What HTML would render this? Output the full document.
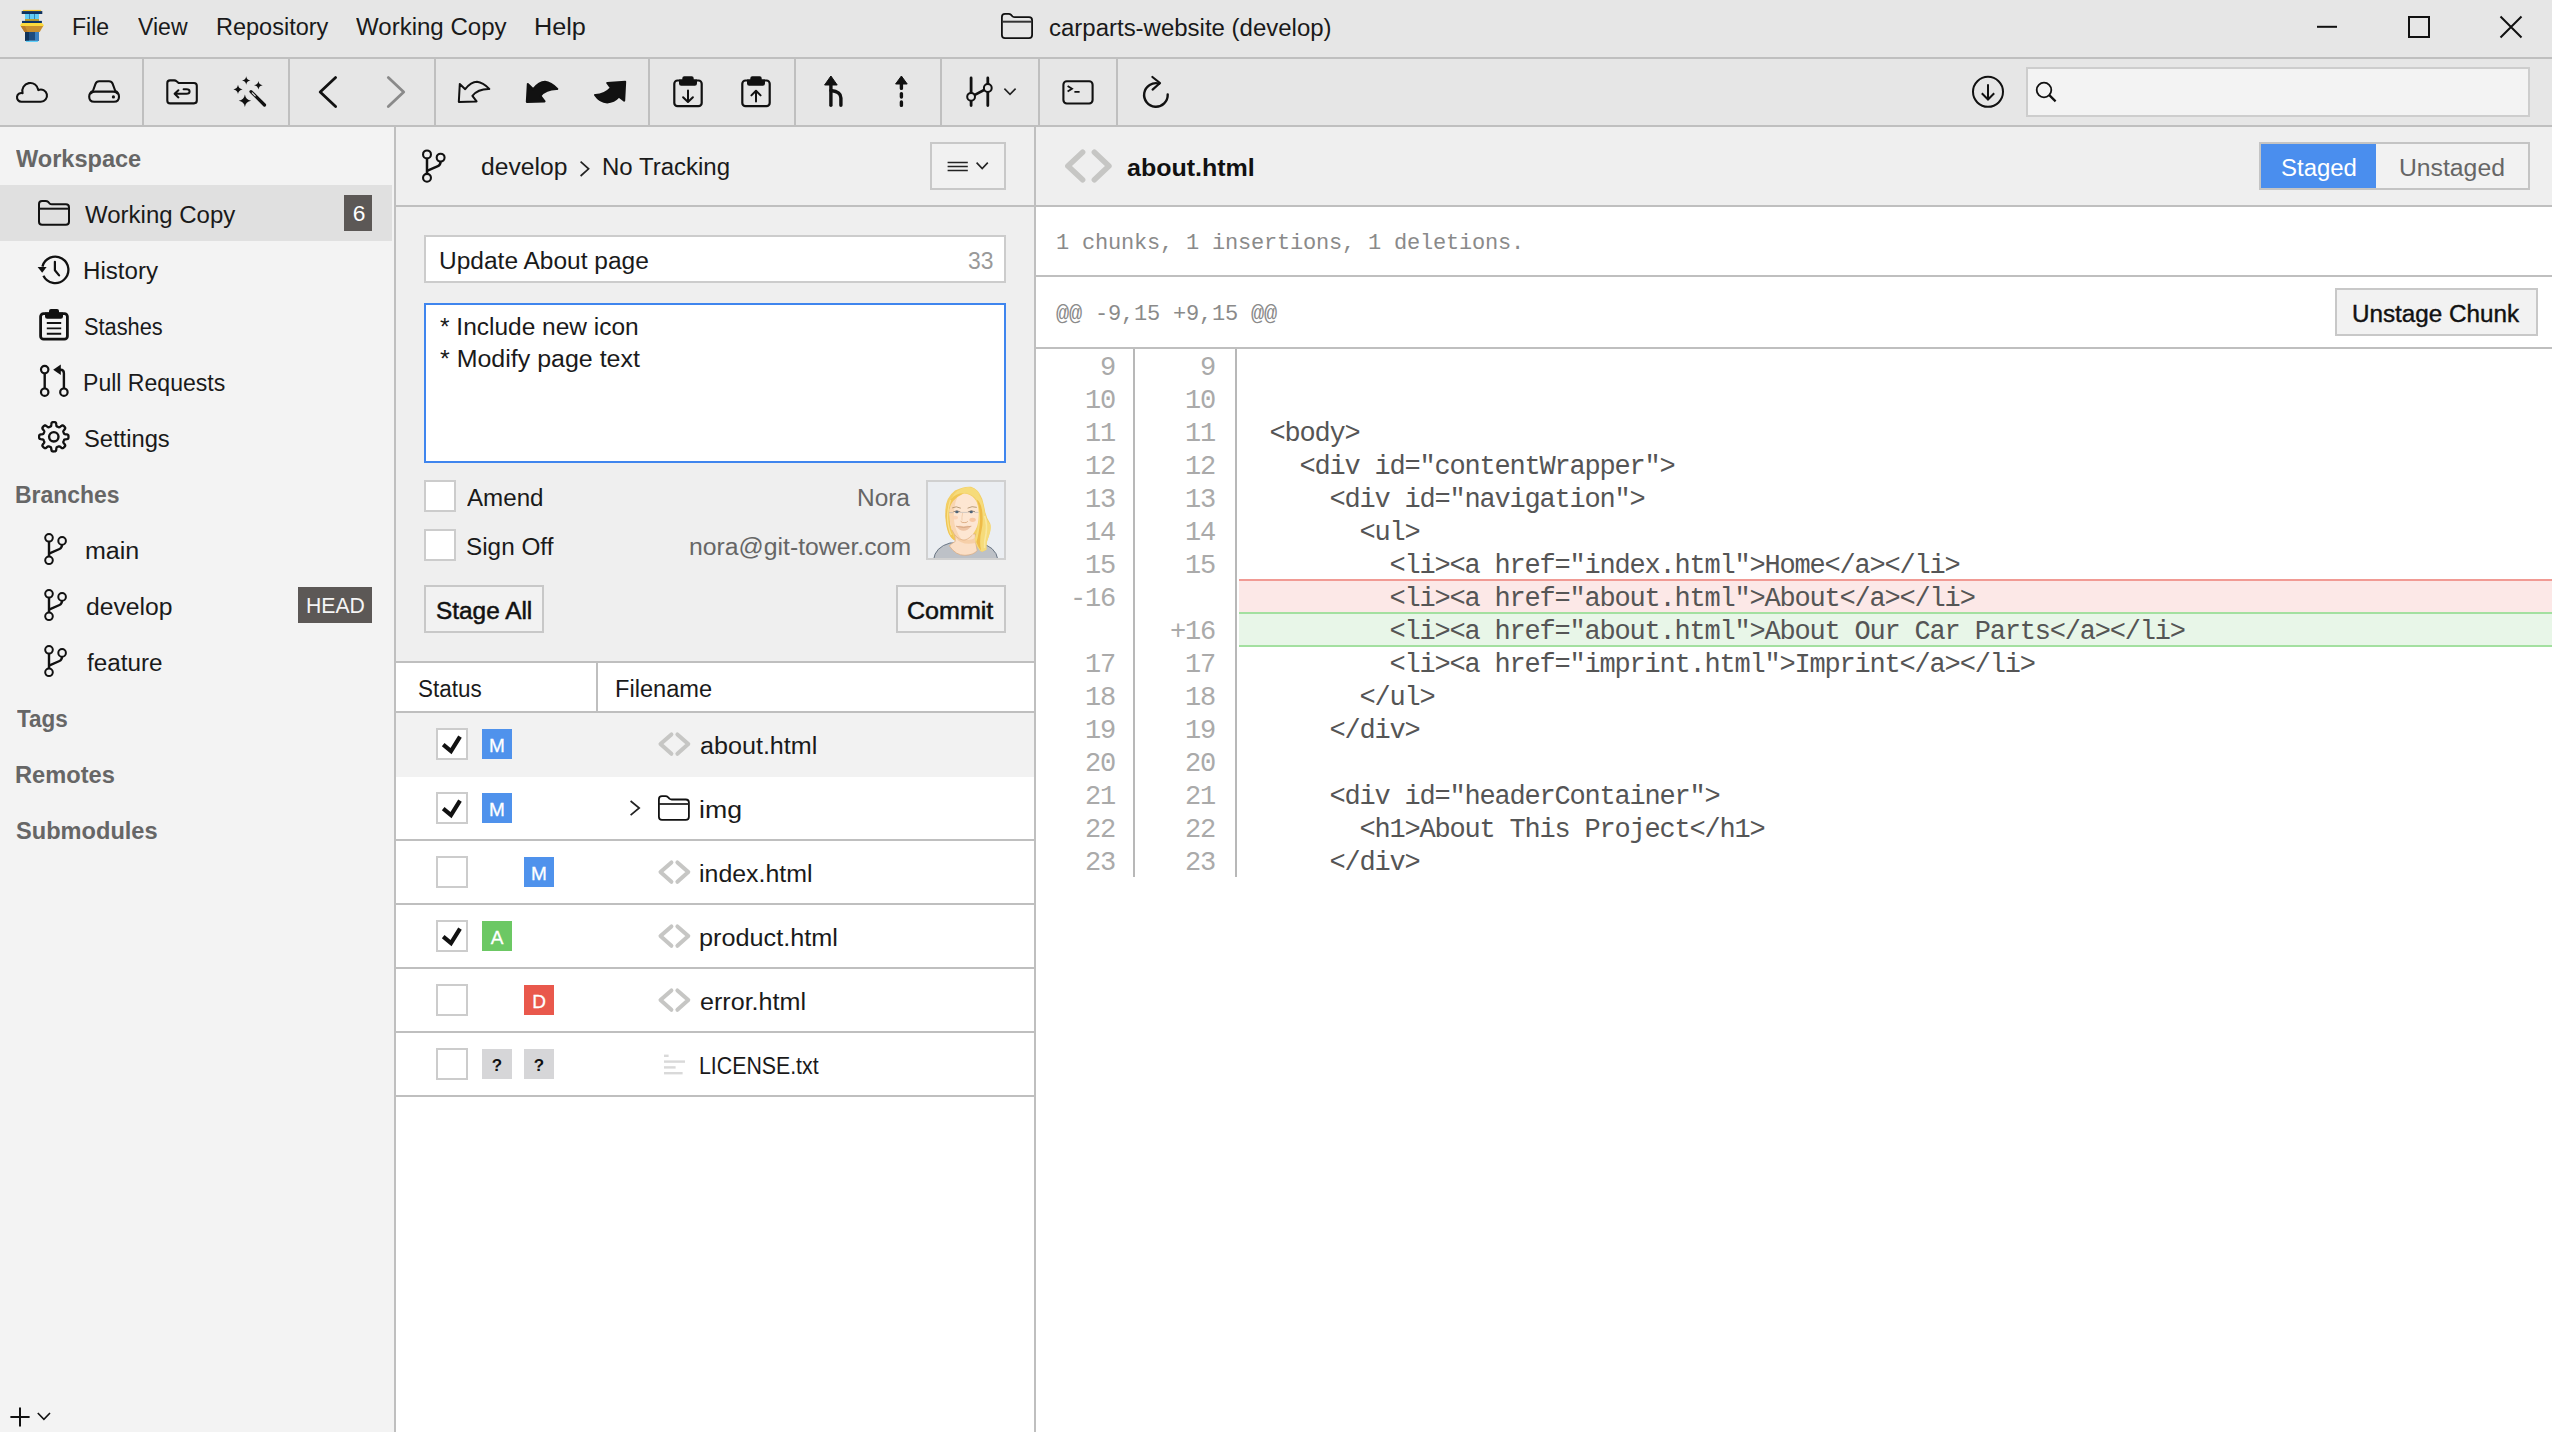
<!DOCTYPE html>
<html lang="en"><head><meta charset="utf-8"><title>carparts-website (develop)</title>
<style>
html,body{margin:0;padding:0;}
body{width:2552px;height:1432px;position:relative;overflow:hidden;background:#fff;font-family:'Liberation Sans', sans-serif;}
.r{position:absolute;}
.t{position:absolute;white-space:pre;line-height:1;}
.m{font-family:'Liberation Mono', monospace;}
svg{position:absolute;left:0;top:0;}
</style></head><body>
<div class="r" style="left:0px;top:0px;width:2552px;height:125px;background:#e6e6e6;"></div>
<div class="r" style="left:0px;top:57px;width:2552px;height:2px;background:#bfbfbf;"></div>
<div class="r" style="left:0px;top:125px;width:2552px;height:2px;background:#bfbfbf;"></div>
<div class="r" style="left:142px;top:59px;width:2px;height:66px;background:#bfbfbf;"></div>
<div class="r" style="left:288px;top:59px;width:2px;height:66px;background:#bfbfbf;"></div>
<div class="r" style="left:434px;top:59px;width:2px;height:66px;background:#bfbfbf;"></div>
<div class="r" style="left:648px;top:59px;width:2px;height:66px;background:#bfbfbf;"></div>
<div class="r" style="left:794px;top:59px;width:2px;height:66px;background:#bfbfbf;"></div>
<div class="r" style="left:940px;top:59px;width:2px;height:66px;background:#bfbfbf;"></div>
<div class="r" style="left:1038px;top:59px;width:2px;height:66px;background:#bfbfbf;"></div>
<div class="r" style="left:1116px;top:59px;width:2px;height:66px;background:#bfbfbf;"></div>
<div class="r" style="left:2026px;top:67px;width:504px;height:50px;background:#f3f3f3;border:2px solid #cdcdcd;box-sizing:border-box;"></div>
<div class="r" style="left:0px;top:127px;width:394px;height:1305px;background:#f3f3f3;"></div>
<div class="r" style="left:394px;top:127px;width:2px;height:1305px;background:#bfbfbf;"></div>
<div class="r" style="left:0px;top:185px;width:392px;height:56px;background:#e0e0e0;"></div>
<div class="r" style="left:344px;top:195px;width:28px;height:36px;background:#5c5856;"></div>
<div class="r" style="left:298px;top:587px;width:74px;height:36px;background:#5c5856;"></div>
<div class="r" style="left:396px;top:127px;width:638px;height:534px;background:#efefef;"></div>
<div class="r" style="left:1034px;top:127px;width:2px;height:1305px;background:#bfbfbf;"></div>
<div class="r" style="left:396px;top:205px;width:638px;height:2px;background:#bfbfbf;"></div>
<div class="r" style="left:396px;top:661px;width:638px;height:2px;background:#bfbfbf;"></div>
<div class="r" style="left:396px;top:711px;width:638px;height:2px;background:#bfbfbf;"></div>
<div class="r" style="left:596px;top:663px;width:2px;height:48px;background:#bfbfbf;"></div>
<div class="r" style="left:930px;top:142px;width:76px;height:48px;background:#f1f1f1;border:2px solid #c8c8c8;box-sizing:border-box;"></div>
<div class="r" style="left:424px;top:235px;width:582px;height:48px;background:#ffffff;border:2px solid #cccccc;box-sizing:border-box;"></div>
<div class="r" style="left:424px;top:303px;width:582px;height:160px;background:#ffffff;border:2px solid #3f85ee;box-sizing:border-box;"></div>
<div class="r" style="left:424px;top:480px;width:32px;height:32px;background:#ffffff;border:2px solid #cccccc;box-sizing:border-box;"></div>
<div class="r" style="left:424px;top:529px;width:32px;height:32px;background:#ffffff;border:2px solid #cccccc;box-sizing:border-box;"></div>
<div class="r" style="left:926px;top:480px;width:80px;height:80px;background:#ebeef2;border:2px solid #d0d0d0;box-sizing:border-box;"></div>
<div class="r" style="left:424px;top:585px;width:120px;height:48px;background:#f2f2f2;border:2px solid #c8c8c8;box-sizing:border-box;"></div>
<div class="r" style="left:896px;top:585px;width:110px;height:48px;background:#f2f2f2;border:2px solid #c8c8c8;box-sizing:border-box;"></div>
<div class="r" style="left:396px;top:713px;width:638px;height:64px;background:#f2f2f2;"></div>
<div class="r" style="left:396px;top:839px;width:638px;height:2px;background:#bfbfbf;"></div>
<div class="r" style="left:396px;top:903px;width:638px;height:2px;background:#bfbfbf;"></div>
<div class="r" style="left:396px;top:967px;width:638px;height:2px;background:#bfbfbf;"></div>
<div class="r" style="left:396px;top:1031px;width:638px;height:2px;background:#bfbfbf;"></div>
<div class="r" style="left:396px;top:1095px;width:638px;height:2px;background:#bfbfbf;"></div>
<div class="r" style="left:436px;top:728px;width:32px;height:32px;background:#ffffff;border:2px solid #cccccc;box-sizing:border-box;"></div>
<div class="r" style="left:436px;top:792px;width:32px;height:32px;background:#ffffff;border:2px solid #cccccc;box-sizing:border-box;"></div>
<div class="r" style="left:436px;top:856px;width:32px;height:32px;background:#ffffff;border:2px solid #cccccc;box-sizing:border-box;"></div>
<div class="r" style="left:436px;top:920px;width:32px;height:32px;background:#ffffff;border:2px solid #cccccc;box-sizing:border-box;"></div>
<div class="r" style="left:436px;top:984px;width:32px;height:32px;background:#ffffff;border:2px solid #cccccc;box-sizing:border-box;"></div>
<div class="r" style="left:436px;top:1048px;width:32px;height:32px;background:#ffffff;border:2px solid #cccccc;box-sizing:border-box;"></div>
<div class="r" style="left:482px;top:729px;width:30px;height:30px;background:#4f92ec;"></div>
<div class="r" style="left:482px;top:793px;width:30px;height:30px;background:#4f92ec;"></div>
<div class="r" style="left:524px;top:857px;width:30px;height:30px;background:#4f92ec;"></div>
<div class="r" style="left:482px;top:921px;width:30px;height:30px;background:#6cc864;"></div>
<div class="r" style="left:524px;top:985px;width:30px;height:30px;background:#e9584c;"></div>
<div class="r" style="left:482px;top:1049px;width:30px;height:30px;background:#d6d6d8;"></div>
<div class="r" style="left:524px;top:1049px;width:30px;height:30px;background:#d6d6d8;"></div>
<div class="r" style="left:1036px;top:127px;width:1516px;height:78px;background:#efefef;"></div>
<div class="r" style="left:1036px;top:205px;width:1516px;height:2px;background:#bfbfbf;"></div>
<div class="r" style="left:1036px;top:275px;width:1516px;height:2px;background:#bfbfbf;"></div>
<div class="r" style="left:1036px;top:347px;width:1516px;height:2px;background:#bfbfbf;"></div>
<div class="r" style="left:2259px;top:142px;width:271px;height:48px;background:#f2f2f2;border:2px solid #c4c4c4;box-sizing:border-box;"></div>
<div class="r" style="left:2261px;top:144px;width:115px;height:44px;background:#4a8eee;"></div>
<div class="r" style="left:2335px;top:288px;width:203px;height:48px;background:#f2f2f2;border:2px solid #c8c8c8;box-sizing:border-box;"></div>
<div class="r" style="left:1133px;top:349px;width:2px;height:528px;background:#b8b8b8;"></div>
<div class="r" style="left:1235px;top:349px;width:2px;height:528px;background:#b8b8b8;"></div>
<div class="r" style="left:1239px;top:579px;width:1313px;height:34px;background:#fce8e7;border-top:2px solid #f19a94;box-sizing:border-box;"></div>
<div class="r" style="left:1239px;top:612px;width:1313px;height:35px;background:#e8f6e8;border-top:2px solid #a3e0a0;border-bottom:2px solid #a3e0a0;box-sizing:border-box;"></div>
<svg width="2552" height="1432" viewBox="0 0 2552 1432">
<g><rect x="22.9" y="9.9" width="18.2" height="1.4" fill="#f8c82c"/><rect x="21.7" y="11.1" width="20.6" height="2.9" fill="#10335f"/><rect x="25" y="14" width="14" height="5.1" fill="#63cdf5"/><rect x="29" y="14" width="0.9" height="5.1" fill="#2d7db5"/><rect x="34.1" y="14" width="0.9" height="5.1" fill="#2d7db5"/><rect x="25" y="19.1" width="14" height="1.8" fill="#b8981e"/><rect x="22" y="20.9" width="19.9" height="2.1" fill="#0c3365"/><path d="M22 23 H41.9 L44 25.2 L43.2 26.2 H20.8 L20 25.2 Z" fill="#fbd93c"/><path d="M20.8 26.1 H43.2 L39.7 32 H24.5 Z" fill="#c98f2e"/><path d="M20.8 26.1 H25 L27.5 32 H24.5 Z" fill="#b87a2a"/><rect x="25" y="32" width="14" height="8.8" fill="#1e4b7e"/><rect x="25" y="32" width="4" height="8.8" fill="#0f3158"/><rect x="35" y="32" width="4" height="8.8" fill="#3a7fc0"/><rect x="25.9" y="40.8" width="12" height="1.2" fill="#5fd0fa"/></g>
<path d="M1001.9 35.0 V17.0 Q1001.9 13.9 1005.0 13.9 H1008.4599999999999 Q1010.06 13.9 1011.26 15.0 L1012.4599999999999 16.3 Q1013.4599999999999 17.2 1014.8599999999999 17.2 H1029.0 Q1032.1 17.2 1032.1 20.3 V35.0 Q1032.1 38.1 1029.0 38.1 H1005.0 Q1001.9 38.1 1001.9 35.0 Z" fill="none" stroke="#111111" stroke-width="1.8" stroke-linecap="round" stroke-linejoin="round" />
<path d="M1001.9 21.7 H1032.1" fill="none" stroke="#333" stroke-width="2.0" stroke-linecap="butt" stroke-linejoin="round" />
<path d="M2317 26.8 H2337" fill="none" stroke="#111111" stroke-width="2" stroke-linecap="butt" stroke-linejoin="round" />
<rect x="2409" y="17" width="20" height="20" fill="none" stroke="#111" stroke-width="2"/>
<path d="M2500.5 16.5 L2521.5 37.5 M2521.5 16.5 L2500.5 37.5" fill="none" stroke="#111111" stroke-width="2" stroke-linecap="butt" stroke-linejoin="round" />
<path d="M21.35 101.7 H40.9 A6.1 6.1 0 1 0 38.34 90.06 A8.05 8.05 0 1 0 22.59 93.18 A4.35 4.35 0 1 0 21.35 101.7 Z" fill="none" stroke="#111111" stroke-width="2.1" stroke-linecap="round" stroke-linejoin="round" />
<path d="M92.9 91 L95.6 83.6 Q96.5 81.2 99.2 81.2 H109 Q111.7 81.2 112.6 83.6 L115.3 91 Q119 92.6 119 96.8 Q119 101.8 114 101.8 H94.2 Q89.2 101.8 89.2 96.8 Q89.2 92.6 92.9 91 Z" fill="none" stroke="#111111" stroke-width="2.1" stroke-linecap="round" stroke-linejoin="round" />
<path d="M90.9 93.4 Q92.2 91.6 95 91.6 H113.2 Q116 91.6 117.3 93.4" fill="none" stroke="#111111" stroke-width="2.1" stroke-linecap="round" stroke-linejoin="round" />
<circle cx="113.4" cy="96.9" r="1.6" fill="#111"/>
<path d="M167.3 100.5 V83 Q167.3 80.4 170 80.4 H174.2 Q175.6 80.4 176.6 81.3 L178.6 83 H194 Q196.8 83 196.8 85.8 V100.6 Q196.8 103.4 194 103.4 H170.1 Q167.3 103.4 167.3 100.5 Z" fill="none" stroke="#111111" stroke-width="2.1" stroke-linecap="round" stroke-linejoin="round" />
<path d="M175 93.8 H186.4 Q189.6 93.8 189.6 91.5 Q189.6 89.3 186.4 89.3 H183.6 M178.4 90.2 L174.6 93.8 L178.4 97.4" fill="none" stroke="#111111" stroke-width="2" stroke-linecap="round" stroke-linejoin="round" />
<path d="M251 91.6 L264.5 105" fill="none" stroke="#111111" stroke-width="3.2" stroke-linecap="round" stroke-linejoin="round" />
<path d="M252.3 92.9 L255.2 95.8" fill="none" stroke="#e6e6e6" stroke-width="1.2" stroke-linecap="round" stroke-linejoin="round" />
<path d="M246.2 76.3 Q246.74599999999998 79.954 250.39999999999998 80.5 Q246.74599999999998 81.046 246.2 84.7 Q245.654 81.046 242.0 80.5 Q245.654 79.954 246.2 76.3 Z" fill="#111"/>
<path d="M258.4 80.9 Q258.959 84.641 262.7 85.2 Q258.959 85.759 258.4 89.5 Q257.84099999999995 85.759 254.09999999999997 85.2 Q257.84099999999995 84.641 258.4 80.9 Z" fill="#111"/>
<path d="M238 84.80000000000001 Q238.598 88.802 242.6 89.4 Q238.598 89.998 238 94.0 Q237.402 89.998 233.4 89.4 Q237.402 88.802 238 84.80000000000001 Z" fill="#111"/>
<path d="M244.9 94.6 Q245.70600000000002 99.994 251.1 100.8 Q245.70600000000002 101.606 244.9 107.0 Q244.094 101.606 238.70000000000002 100.8 Q244.094 99.994 244.9 94.6 Z" fill="#111"/>
<path d="M335.6 77.6 L320.2 92 L335.6 106.6" fill="none" stroke="#111111" stroke-width="2.8" stroke-linecap="round" stroke-linejoin="round" />
<path d="M388.3 77.6 L403.7 92 L388.3 106.6" fill="none" stroke="#8a8a8a" stroke-width="2.8" stroke-linecap="round" stroke-linejoin="round" />
<path d="M459.8 84 L458.8 101.9 L476.6 101.4 L472.4 95.8 Q478 88.6 489.3 88.9 Q483 82.5 477 81.8 Q471 81.8 465.2 89.2 Z" fill="none" stroke="#111111" stroke-width="2" stroke-linecap="round" stroke-linejoin="round" />
<path d="M527.8 84 L526.8 101.9 L544.6 101.4 L540.4 95.8 Q546 88.6 557.3 88.9 Q551 82.5 545 81.8 Q539 81.8 533.2 89.2 Z" fill="#111111" stroke="#111111" stroke-width="2" stroke-linecap="round" stroke-linejoin="round" />
<path d="M625.2 81.8 L607.2 83 L610.9 88 Q604 95.2 595 95 Q600 102.4 607.2 102.4 Q614 102 619 96.6 L624.2 100.6 Z" fill="#111111" stroke="#111111" stroke-width="2" stroke-linecap="round" stroke-linejoin="round" />
<rect x="674.3" y="80.5" width="27.4" height="25.6" rx="3.2" fill="none" stroke="#111" stroke-width="2.2"/>
<path d="M679 79.6 H682 Q682.6 76.2 685.5 76.2 H690.5 Q693.4 76.2 694 79.6 H697 V83.4 Q0 0 0 0" fill="none"/>
<path d="M679 79.4 H682.3 V78.2 Q682.3 76.2 684.3 76.2 H691.7 Q693.7 76.2 693.7 78.2 V79.4 H697 V83.6 Q697 85.8 694.8 85.8 H681.2 Q679 85.8 679 83.6 Z" fill="#111"/>
<path d="M688 90.4 V101.8 M683.1 97.2 L688 102 L692.9 97.2" fill="none" stroke="#111111" stroke-width="2" stroke-linecap="round" stroke-linejoin="round" />
<rect x="742.3" y="80.5" width="27.4" height="25.6" rx="3.2" fill="none" stroke="#111" stroke-width="2.2"/>
<path d="M747 79.6 H750 Q750.6 76.2 753.5 76.2 H758.5 Q761.4 76.2 762 79.6 H765 V83.4 Q0 0 0 0" fill="none"/>
<path d="M747 79.4 H750.3 V78.2 Q750.3 76.2 752.3 76.2 H759.7 Q761.7 76.2 761.7 78.2 V79.4 H765 V83.6 Q765 85.8 762.8 85.8 H749.2 Q747 85.8 747 83.6 Z" fill="#111"/>
<path d="M756 101.6 V91 M751.4 95.4 L756 90.8 L760.6 95.4" fill="none" stroke="#111111" stroke-width="2" stroke-linecap="round" stroke-linejoin="round" />
<path d="M830.9 76 L837.2 85 H824.6 Z" fill="#111" stroke="#111" stroke-width="1" stroke-linejoin="round"/>
<path d="M830.9 84 V105.2" fill="none" stroke="#111111" stroke-width="3.4" stroke-linecap="round" stroke-linejoin="round" />
<path d="M830.9 90.5 Q840.9 91.5 840.9 98 V105.2" fill="none" stroke="#111111" stroke-width="3.4" stroke-linecap="round" stroke-linejoin="round" />
<path d="M901.4 76 L907.2 84 H895.6 Z" fill="#111" stroke="#111" stroke-width="1" stroke-linejoin="round"/>
<path d="M901.4 84 V88.4 M901.4 93.6 V97 M901.4 102 V105.4" fill="none" stroke="#111111" stroke-width="3.4" stroke-linecap="round" stroke-linejoin="round" />
<path d="M971.1 78 V105.6 M987.8 78 V105.6" fill="none" stroke="#111111" stroke-width="2.8" stroke-linecap="round" stroke-linejoin="round" />
<path d="M971.1 96.8 L987.8 88" fill="none" stroke="#111111" stroke-width="2.6" stroke-linecap="round" stroke-linejoin="round" />
<circle cx="971.1" cy="96.8" r="3.9" fill="#e6e6e6" stroke="#111111" stroke-width="2.0"/>
<circle cx="987.8" cy="88" r="3.9" fill="#e6e6e6" stroke="#111111" stroke-width="2.0"/>
<path d="M1004.4 88.6 L1010 94.4 L1015.6 88.6" fill="none" stroke="#222" stroke-width="1.6" stroke-linecap="butt" stroke-linejoin="miter" />
<rect x="1063.4" y="81.3" width="29.2" height="22.2" rx="3.4" fill="none" stroke="#111" stroke-width="2.1"/>
<path d="M1067.6 86 L1072 88.8 L1067.6 91.6 M1074.4 91.8 H1079.6" fill="none" stroke="#111111" stroke-width="1.8" stroke-linecap="butt" stroke-linejoin="miter" />
<path d="M1159.2 83.6 A11.8 11.8 0 1 0 1167.7 94.4" fill="none" stroke="#111111" stroke-width="2.4" stroke-linecap="round" stroke-linejoin="round" />
<path d="M1152.4 77 L1160 83 L1152.6 89.6" fill="none" stroke="#111111" stroke-width="2.2" stroke-linecap="round" stroke-linejoin="round" />
<circle cx="1988" cy="91.85" r="15" fill="none" stroke="#111111" stroke-width="2.0"/>
<path d="M1988 84.2 V99.2 M1981.8 93.3 L1988 99.5 L1994.2 93.3" fill="none" stroke="#111111" stroke-width="2.0" stroke-linecap="butt" stroke-linejoin="miter" />
<circle cx="2044" cy="90" r="7.3" fill="none" stroke="#111111" stroke-width="1.8"/>
<path d="M2049.3 95.2 L2055.6 101.3" fill="none" stroke="#111111" stroke-width="2.3" stroke-linecap="butt" stroke-linejoin="round" />
<path d="M39.0 221.70000000000002 V204.1 Q39.0 201.0 42.1 201.0 H45.559999999999995 Q47.16 201.0 48.36 202.1 L49.559999999999995 203.4 Q50.559999999999995 204.3 51.959999999999994 204.3 H65.9 Q69.0 204.3 69.0 207.4 V221.70000000000002 Q69.0 224.8 65.9 224.8 H42.1 Q39.0 224.8 39.0 221.70000000000002 Z" fill="none" stroke="#111111" stroke-width="2.0" stroke-linecap="round" stroke-linejoin="round" />
<path d="M39.0 208.7 H69.0" fill="none" stroke="#161616" stroke-width="2.0" stroke-linecap="butt" stroke-linejoin="round" />
<path d="M42.4 266.6 A13.2 13.2 0 1 1 43.4 275.8" fill="none" stroke="#111111" stroke-width="2.3" stroke-linecap="butt" stroke-linejoin="round" />
<path d="M37.6 267.0 H46.6 L42.2 272.8 Z" fill="#111"/>
<path d="M54.9 261.8 V270.2 L59.1 275.4" fill="none" stroke="#111111" stroke-width="2.2" stroke-linecap="round" stroke-linejoin="round" />
<rect x="40.6" y="313.6" width="26.8" height="25.6" rx="3" fill="none" stroke="#111" stroke-width="2.8"/>
<path d="M45 312.4 H49 V311 Q49 309 51 309 H57 Q59 309 59 311 V312.4 H63 V316.6 Q63 318.8 60.8 318.8 H47.2 Q45 318.8 45 316.6 Z" fill="#111"/>
<path d="M46.8 323 H61.2 M46.8 328.4 H61.2 M46.8 333.8 H61.2" fill="none" stroke="#111111" stroke-width="1.9" stroke-linecap="butt" stroke-linejoin="round" />
<circle cx="44.7" cy="369.6" r="3.7" fill="none" stroke="#111111" stroke-width="2.2"/>
<circle cx="44.7" cy="392.2" r="3.7" fill="none" stroke="#111111" stroke-width="2.2"/>
<circle cx="63.9" cy="392.2" r="3.7" fill="none" stroke="#111111" stroke-width="2.2"/>
<path d="M44.7 373.4 V388.4" fill="none" stroke="#111111" stroke-width="2.4" stroke-linecap="butt" stroke-linejoin="round" />
<path d="M63.9 388.4 V373.2 Q63.9 369.8 60.5 369.8 H59" fill="none" stroke="#111111" stroke-width="2.4" stroke-linecap="butt" stroke-linejoin="round" />
<path d="M53.2 369.8 L60.8 364.6 V375 Z" fill="#111"/>
<path d="M68.48 436.80 L68.47 437.18 L68.45 437.57 L68.40 437.95 L68.30 438.32 L68.10 438.68 L67.66 439.00 L66.81 439.21 L65.70 439.33 L64.85 439.45 L64.40 439.64 L64.17 439.87 L64.03 440.12 L63.92 440.38 L63.81 440.64 L63.71 440.90 L63.60 441.16 L63.49 441.42 L63.39 441.68 L63.31 441.96 L63.31 442.29 L63.49 442.74 L64.01 443.43 L64.70 444.29 L65.15 445.05 L65.24 445.58 L65.13 445.98 L64.93 446.31 L64.70 446.61 L64.45 446.90 L64.18 447.18 L63.90 447.45 L63.61 447.70 L63.31 447.93 L62.98 448.13 L62.58 448.24 L62.05 448.15 L61.29 447.70 L60.43 447.01 L59.74 446.49 L59.29 446.31 L58.96 446.31 L58.68 446.39 L58.42 446.49 L58.16 446.60 L57.90 446.71 L57.64 446.81 L57.38 446.92 L57.12 447.03 L56.87 447.17 L56.64 447.40 L56.45 447.85 L56.33 448.70 L56.21 449.81 L56.00 450.66 L55.68 451.10 L55.32 451.30 L54.95 451.40 L54.57 451.45 L54.18 451.47 L53.80 451.48 L53.42 451.47 L53.03 451.45 L52.65 451.40 L52.28 451.30 L51.92 451.10 L51.60 450.66 L51.39 449.81 L51.27 448.70 L51.15 447.85 L50.96 447.40 L50.73 447.17 L50.48 447.03 L50.22 446.92 L49.96 446.81 L49.70 446.71 L49.44 446.60 L49.18 446.49 L48.92 446.39 L48.64 446.31 L48.31 446.31 L47.86 446.49 L47.17 447.01 L46.31 447.70 L45.55 448.15 L45.02 448.24 L44.62 448.13 L44.29 447.93 L43.99 447.70 L43.70 447.45 L43.42 447.18 L43.15 446.90 L42.90 446.61 L42.67 446.31 L42.47 445.98 L42.36 445.58 L42.45 445.05 L42.90 444.29 L43.59 443.43 L44.11 442.74 L44.29 442.29 L44.29 441.96 L44.21 441.68 L44.11 441.42 L44.00 441.16 L43.89 440.90 L43.79 440.64 L43.68 440.38 L43.57 440.12 L43.43 439.87 L43.20 439.64 L42.75 439.45 L41.90 439.33 L40.79 439.21 L39.94 439.00 L39.50 438.68 L39.30 438.32 L39.20 437.95 L39.15 437.57 L39.13 437.18 L39.12 436.80 L39.13 436.42 L39.15 436.03 L39.20 435.65 L39.30 435.28 L39.50 434.92 L39.94 434.60 L40.79 434.39 L41.90 434.27 L42.75 434.15 L43.20 433.96 L43.43 433.73 L43.57 433.48 L43.68 433.22 L43.79 432.96 L43.89 432.70 L44.00 432.44 L44.11 432.18 L44.21 431.92 L44.29 431.64 L44.29 431.31 L44.11 430.86 L43.59 430.17 L42.90 429.31 L42.45 428.55 L42.36 428.02 L42.47 427.62 L42.67 427.29 L42.90 426.99 L43.15 426.70 L43.42 426.42 L43.70 426.15 L43.99 425.90 L44.29 425.67 L44.62 425.47 L45.02 425.36 L45.55 425.45 L46.31 425.90 L47.17 426.59 L47.86 427.11 L48.31 427.29 L48.64 427.29 L48.92 427.21 L49.18 427.11 L49.44 427.00 L49.70 426.89 L49.96 426.79 L50.22 426.68 L50.48 426.57 L50.73 426.43 L50.96 426.20 L51.15 425.75 L51.27 424.90 L51.39 423.79 L51.60 422.94 L51.92 422.50 L52.28 422.30 L52.65 422.20 L53.03 422.15 L53.42 422.13 L53.80 422.12 L54.18 422.13 L54.57 422.15 L54.95 422.20 L55.32 422.30 L55.68 422.50 L56.00 422.94 L56.21 423.79 L56.33 424.90 L56.45 425.75 L56.64 426.20 L56.87 426.43 L57.12 426.57 L57.38 426.68 L57.64 426.79 L57.90 426.89 L58.16 427.00 L58.42 427.11 L58.68 427.21 L58.96 427.29 L59.29 427.29 L59.74 427.11 L60.43 426.59 L61.29 425.90 L62.05 425.45 L62.58 425.36 L62.98 425.47 L63.31 425.67 L63.61 425.90 L63.90 426.15 L64.18 426.42 L64.45 426.70 L64.70 426.99 L64.93 427.29 L65.13 427.62 L65.24 428.02 L65.15 428.55 L64.70 429.31 L64.01 430.17 L63.49 430.86 L63.31 431.31 L63.31 431.64 L63.39 431.92 L63.49 432.18 L63.60 432.44 L63.71 432.70 L63.81 432.96 L63.92 433.22 L64.03 433.48 L64.17 433.73 L64.40 433.96 L64.85 434.15 L65.70 434.27 L66.81 434.39 L67.66 434.60 L68.10 434.92 L68.30 435.28 L68.40 435.65 L68.45 436.03 L68.47 436.42 Z" fill="none" stroke="#111111" stroke-width="2.3" stroke-linecap="round" stroke-linejoin="round" />
<circle cx="53.8" cy="436.8" r="4.7" fill="none" stroke="#111111" stroke-width="2.4"/>
<circle cx="49.0" cy="537.8" r="3.8" fill="none" stroke="#111111" stroke-width="2.0"/>
<circle cx="62.1" cy="540.9" r="3.8" fill="none" stroke="#111111" stroke-width="2.0"/>
<circle cx="49.0" cy="560.3" r="3.8" fill="none" stroke="#111111" stroke-width="2.0"/>
<path d="M49.0 541.6 V556.5" fill="none" stroke="#111111" stroke-width="2.4" stroke-linecap="butt" stroke-linejoin="round" />
<path d="M62.1 544.7 Q61.8 548.0 59.5 549.0 L49.0 553.6" fill="none" stroke="#111111" stroke-width="2.4" stroke-linecap="butt" stroke-linejoin="round" />
<circle cx="49.0" cy="593.8" r="3.8" fill="none" stroke="#111111" stroke-width="2.0"/>
<circle cx="62.1" cy="596.9" r="3.8" fill="none" stroke="#111111" stroke-width="2.0"/>
<circle cx="49.0" cy="616.3" r="3.8" fill="none" stroke="#111111" stroke-width="2.0"/>
<path d="M49.0 597.6 V612.5" fill="none" stroke="#111111" stroke-width="2.4" stroke-linecap="butt" stroke-linejoin="round" />
<path d="M62.1 600.7 Q61.8 604.0 59.5 605.0 L49.0 609.6" fill="none" stroke="#111111" stroke-width="2.4" stroke-linecap="butt" stroke-linejoin="round" />
<circle cx="49.0" cy="649.8" r="3.8" fill="none" stroke="#111111" stroke-width="2.0"/>
<circle cx="62.1" cy="652.9" r="3.8" fill="none" stroke="#111111" stroke-width="2.0"/>
<circle cx="49.0" cy="672.3" r="3.8" fill="none" stroke="#111111" stroke-width="2.0"/>
<path d="M49.0 653.6 V668.5" fill="none" stroke="#111111" stroke-width="2.4" stroke-linecap="butt" stroke-linejoin="round" />
<path d="M62.1 656.7 Q61.8 660.0 59.5 661.0 L49.0 665.6" fill="none" stroke="#111111" stroke-width="2.4" stroke-linecap="butt" stroke-linejoin="round" />
<circle cx="427.0" cy="154.4" r="3.952" fill="none" stroke="#111111" stroke-width="2.08"/>
<circle cx="440.624" cy="157.62400000000002" r="3.952" fill="none" stroke="#111111" stroke-width="2.08"/>
<circle cx="427.0" cy="177.8" r="3.952" fill="none" stroke="#111111" stroke-width="2.08"/>
<path d="M427.0 158.3520000000001 V173.84800000000004" fill="none" stroke="#111111" stroke-width="2.496" stroke-linecap="butt" stroke-linejoin="round" />
<path d="M440.624 161.5760000000001 Q440.312 165.00800000000007 437.92 166.04800000000006 L427.0 170.83200000000008" fill="none" stroke="#111111" stroke-width="2.496" stroke-linecap="butt" stroke-linejoin="round" />
<path d="M20 1407.6 V1426.4 M10.4 1417 H29.6" fill="none" stroke="#111111" stroke-width="2" stroke-linecap="butt" stroke-linejoin="round" />
<path d="M37.8 1413 L43.9 1419.4 L50 1413" fill="none" stroke="#111111" stroke-width="1.6" stroke-linecap="butt" stroke-linejoin="miter" />
<path d="M580.6 161.6 L588.6 168.8 L580.6 176" fill="none" stroke="#222" stroke-width="1.7" stroke-linecap="butt" stroke-linejoin="miter" />
<path d="M947.6 162.4 H967.8 M947.6 166.4 H967.8 M947.6 170.4 H967.8" fill="none" stroke="#222" stroke-width="1.5" stroke-linecap="butt" stroke-linejoin="round" />
<path d="M976.6 162.6 L982.2 168.6 L987.8 162.6" fill="none" stroke="#222" stroke-width="1.6" stroke-linecap="butt" stroke-linejoin="miter" />
<path d="M443.2 744.6 L451 751 L460 736.6" fill="none" stroke="#111111" stroke-width="4.2" stroke-linecap="butt" stroke-linejoin="miter" />
<path d="M443.2 808.6 L451 815 L460 800.6" fill="none" stroke="#111111" stroke-width="4.2" stroke-linecap="butt" stroke-linejoin="miter" />
<path d="M443.2 936.6 L451 943 L460 928.6" fill="none" stroke="#111111" stroke-width="4.2" stroke-linecap="butt" stroke-linejoin="miter" />
<path d="M671.4 734.4 L660.5 744.1 L671.4 753.8000000000001 M677.4 734.4 L688.3 744.1 L677.4 753.8000000000001" fill="none" stroke="#c6c6c4" stroke-width="4.0" stroke-linecap="round" stroke-linejoin="round" />
<path d="M671.4 862.4 L660.5 872.1 L671.4 881.8000000000001 M677.4 862.4 L688.3 872.1 L677.4 881.8000000000001" fill="none" stroke="#c6c6c4" stroke-width="4.0" stroke-linecap="round" stroke-linejoin="round" />
<path d="M671.4 926.4 L660.5 936.1 L671.4 945.8000000000001 M677.4 926.4 L688.3 936.1 L677.4 945.8000000000001" fill="none" stroke="#c6c6c4" stroke-width="4.0" stroke-linecap="round" stroke-linejoin="round" />
<path d="M671.4 990.4 L660.5 1000.1 L671.4 1009.8000000000001 M677.4 990.4 L688.3 1000.1 L677.4 1009.8000000000001" fill="none" stroke="#c6c6c4" stroke-width="4.0" stroke-linecap="round" stroke-linejoin="round" />
<path d="M630.6 801 L639.2 808 L630.6 815.2" fill="none" stroke="#222" stroke-width="1.7" stroke-linecap="butt" stroke-linejoin="miter" />
<path d="M658.9 816.6999999999999 V799.3 Q658.9 796.1999999999999 662.0 796.1999999999999 H665.409 Q667.009 796.1999999999999 668.2090000000001 797.3 L669.409 798.5999999999999 Q670.409 799.4999999999999 671.809 799.4999999999999 H685.8 Q688.9 799.4999999999999 688.9 802.5999999999999 V816.6999999999999 Q688.9 819.8 685.8 819.8 H662.0 Q658.9 819.8 658.9 816.6999999999999 Z" fill="none" stroke="#111111" stroke-width="1.8" stroke-linecap="round" stroke-linejoin="round" />
<path d="M658.9 804.0 H688.9" fill="none" stroke="#222" stroke-width="1.8" stroke-linecap="butt" stroke-linejoin="round" />
<g fill="#d9d9d9"><rect x="664" y="1054.6" width="4.6" height="2.4"/><rect x="664" y="1060.4" width="21" height="2.4"/><rect x="664" y="1066.2" width="11.6" height="2.4"/><rect x="664" y="1072" width="18.6" height="2.4"/></g>
<path d="M1082.6 152.2 L1067.9 166 L1082.6 179.8 M1094.4 152.2 L1108.9 166 L1094.4 179.8" fill="none" stroke="#c6c6c4" stroke-width="5.6" stroke-linecap="round" stroke-linejoin="round" />
<g transform="translate(926 480)"><clipPath id="avc"><rect x="2" y="2" width="76" height="76"/></clipPath><g clip-path="url(#avc)"><path d="M7.5 80 Q9 67 24 63 L52 62.5 Q70 66 72 80 Z" fill="#bdc1c7" stroke="#5e6b7a" stroke-width="0.9"/><path d="M19.3 32 Q19 18 29 10.5 Q38 6 45 6.8 Q52 8.5 56.3 19 Q58.5 27 59.2 32 Q61 39 64.2 43.5 Q65.6 48.5 62.8 56 Q59.4 64 60.6 69.6 Q57 73 54 71 Q50 66 48.7 59 L29.2 60.6 Q24 58 22.2 51 Q19.6 42 19.3 32 Z" fill="#f3cf66"/><path d="M29 54 L29.2 61.5 Q25 63.6 23.4 66 Q30 75.6 39 75.3 Q47.5 75 51.2 70.6 L49.2 60 L49.4 54 Z" fill="#fbdfc6" stroke="#dcab7c" stroke-width="0.7"/><path d="M30 58 Q36 66 49.5 63 L49.3 58 Q40 63 30 56 Z" fill="#f6cfa8"/><path d="M23.4 30 Q23 16.5 38 13.4 Q52 15 53 32 Q53.6 46 46.4 55 Q41 60.6 37 60 Q30 59 26 50 Q23 42 23.4 30 Z" fill="#fde6d2"/><path d="M23.4 30 Q23 17.5 32.5 14.4 Q27.5 24 27.8 38 Q28.4 50 35.5 59.6 Q30 58.4 26 50 Q23 42 23.4 30 Z" fill="#f9d6b2"/><path d="M26 50 Q30 59 37 60 Q41 60.6 46.4 55" fill="none" stroke="#dcab7c" stroke-width="0.7"/><path d="M20.2 33 Q22.6 32 22.8 37 L22.6 42.4 Q20.6 42 20.2 38 Z" fill="#fbdcc0" stroke="#dcab7c" stroke-width="0.5"/><ellipse cx="29" cy="37.6" rx="3" ry="1.9" fill="#fbd2b4" opacity="0.9"/><ellipse cx="46.6" cy="39.8" rx="3.2" ry="2.1" fill="#f6c49e" opacity="0.9"/><path d="M26.2 27.9 Q30 25.6 34.8 28.2" fill="none" stroke="#a98a63" stroke-width="0.8"/><path d="M41.6 28.2 Q46 25.6 50.8 27.4" fill="none" stroke="#a98a63" stroke-width="0.8"/><path d="M20 32.6 H27 M34.6 32.4 H41.4 M49 32.4 H52.6" stroke="#a4a9ae" stroke-width="0.5"/><path d="M27.4 31.8 Q30.8 29.6 34.4 32" fill="none" stroke="#6a5a4e" stroke-width="0.7"/><path d="M41.8 32 Q45.4 29.6 49 31.8" fill="none" stroke="#6a5a4e" stroke-width="0.7"/><ellipse cx="30.9" cy="32" rx="1.7" ry="1.35" fill="#4e6579"/><ellipse cx="45.2" cy="32" rx="1.7" ry="1.35" fill="#4e6579"/><path d="M34.6 41.2 Q36 43 38.2 42.6 Q40.4 43 41.8 41.4" fill="none" stroke="#d6a174" stroke-width="0.8"/><path d="M36.6 33 Q35.6 38 36 40.6" fill="none" stroke="#ecc4a0" stroke-width="0.7"/><path d="M30.2 46.2 Q34 45.4 37.6 46.2 Q41.4 45.4 45.2 46.2 Q41.6 50.8 37.6 50.8 Q33.6 50.8 30.2 46.2 Z" fill="#eec4a4"/><path d="M30 46.2 Q37.6 48.8 45.4 46.2" fill="none" stroke="#cf9e7a" stroke-width="0.7"/><path d="M38 13.2 Q30 12 25 19 Q20.2 26 19.4 36 Q19.8 47 22.6 53.4 Q25.6 59.2 29.2 60.6 Q26.6 56 25 50 Q22.6 42 23.3 30 Q24.4 19.6 38 13.2 Z" fill="#f1c653"/><path d="M24.6 20 Q21.6 28 21.6 38 Q22 48 25.4 55" fill="none" stroke="#f8e08c" stroke-width="1.4"/><path d="M25 19 Q30 8.4 42 7 Q50.4 7.4 54.4 15.6 Q48 10.4 38 13.2 Q30 13 25 19 Z" fill="#f6db7a"/><path d="M38 13.2 Q46 8.6 51.4 12.4 Q57 19.6 58.4 31 Q60.2 40 64.2 44.6 Q65.6 50 62.6 57 Q59.6 64 60.6 69.6 Q56.4 72.6 54 70.6 Q50 66 48.8 58.6 Q52 50 52.6 40 Q53.2 26 50 19 Q46 13.2 38 13.2 Z" fill="#f6db7a"/><path d="M50.6 19.6 Q54.6 30 54 42 Q53 54 50.4 62 Q52 67 55 70.4 Q53 60 55.6 50 Q57.6 40 56 30 Q54.6 22 50.6 19.6 Z" fill="#eebb48"/><path d="M58.6 36 Q61.6 44 60 54 Q58 62 58.6 68" fill="none" stroke="#f9e79e" stroke-width="1.6"/></g></g>
</svg>
<div class="t" style="top:16.00px;font-size:23.5px;color:#1a1a1a;left:71.74px;transform:scaleX(0.9800);transform-origin:0 0;">File</div>
<div class="t" style="top:16.00px;font-size:23.5px;color:#1a1a1a;left:137.50px;transform:scaleX(0.9804);transform-origin:0 0;">View</div>
<div class="t" style="top:16.00px;font-size:23.5px;color:#1a1a1a;left:216.00px;">Repository</div>
<div class="t" style="top:16.00px;font-size:23.5px;color:#1a1a1a;left:356.40px;transform:scaleX(1.0231);transform-origin:0 0;">Working Copy</div>
<div class="t" style="top:16.00px;font-size:23.5px;color:#1a1a1a;left:534.15px;transform:scaleX(1.0733);transform-origin:0 0;">Help</div>
<div class="t" style="top:17.00px;font-size:23.5px;color:#1a1a1a;left:1048.88px;transform:scaleX(1.0204);transform-origin:0 0;">carparts-website (develop)</div>
<div class="t" style="top:148.00px;font-size:23.5px;color:#666666;left:16.20px;font-weight:700;transform:scaleX(1.0016);transform-origin:0 0;">Workspace</div>
<div class="t" style="top:484.00px;font-size:23.5px;color:#666666;left:14.85px;font-weight:700;transform:scaleX(0.9769);transform-origin:0 0;">Branches</div>
<div class="t" style="top:708.00px;font-size:23.5px;color:#666666;left:16.80px;font-weight:700;transform:scaleX(0.9558);transform-origin:0 0;">Tags</div>
<div class="t" style="top:764.00px;font-size:23.5px;color:#666666;left:14.79px;font-weight:700;transform:scaleX(1.0063);transform-origin:0 0;">Remotes</div>
<div class="t" style="top:820.00px;font-size:23.5px;color:#666666;left:15.80px;font-weight:700;transform:scaleX(1.0043);transform-origin:0 0;">Submodules</div>
<div class="t" style="top:204.00px;font-size:23.5px;color:#1a1a1a;left:84.60px;transform:scaleX(1.0211);transform-origin:0 0;">Working Copy</div>
<div class="t" style="top:260.00px;font-size:23.5px;color:#1a1a1a;left:83.35px;transform:scaleX(1.0268);transform-origin:0 0;">History</div>
<div class="t" style="top:316.00px;font-size:23.5px;color:#1a1a1a;left:84.17px;transform:scaleX(0.9277);transform-origin:0 0;">Stashes</div>
<div class="t" style="top:372.00px;font-size:23.5px;color:#1a1a1a;left:83.24px;transform:scaleX(0.9810);transform-origin:0 0;">Pull Requests</div>
<div class="t" style="top:428.00px;font-size:23.5px;color:#1a1a1a;left:84.19px;transform:scaleX(1.0096);transform-origin:0 0;">Settings</div>
<div class="t" style="top:540.00px;font-size:23.5px;color:#1a1a1a;left:85.27px;transform:scaleX(1.0660);transform-origin:0 0;">main</div>
<div class="t" style="top:596.00px;font-size:23.5px;color:#1a1a1a;left:85.75px;transform:scaleX(1.0513);transform-origin:0 0;">develop</div>
<div class="t" style="top:652.00px;font-size:23.5px;color:#1a1a1a;left:87.20px;transform:scaleX(1.0319);transform-origin:0 0;">feature</div>
<div class="t" style="top:202.00px;font-size:22.8px;color:#fff;left:352.70px;">6</div>
<div class="t" style="top:594.00px;font-size:22.8px;color:#f5f5f5;left:305.64px;transform:scaleX(0.9300);transform-origin:0 0;">HEAD</div>
<div class="t" style="top:156.00px;font-size:23.5px;color:#1a1a1a;left:480.85px;transform:scaleX(1.0500);transform-origin:0 0;">develop</div>
<div class="t" style="top:156.00px;font-size:23.5px;color:#1a1a1a;left:602.46px;transform:scaleX(1.0213);transform-origin:0 0;">No Tracking</div>
<div class="t" style="top:250.00px;font-size:23.5px;color:#1a1a1a;left:439.41px;transform:scaleX(1.0429);transform-origin:0 0;">Update About page</div>
<div class="t" style="top:250.00px;font-size:23.5px;color:#999;left:968.02px;transform:scaleX(0.9750);transform-origin:0 0;">33</div>
<div class="t" style="top:316.00px;font-size:23.5px;color:#1a1a1a;left:439.96px;transform:scaleX(1.0420);transform-origin:0 0;">* Include new icon</div>
<div class="t" style="top:348.00px;font-size:23.5px;color:#1a1a1a;left:439.94px;transform:scaleX(1.0626);transform-origin:0 0;">* Modify page text</div>
<div class="t" style="top:487.00px;font-size:23.5px;color:#1a1a1a;left:466.60px;transform:scaleX(1.0274);transform-origin:0 0;">Amend</div>
<div class="t" style="top:536.00px;font-size:23.5px;color:#1a1a1a;left:465.97px;transform:scaleX(1.0345);transform-origin:0 0;">Sign Off</div>
<div class="t" style="top:487.00px;font-size:23.5px;color:#666;left:856.72px;transform:scaleX(1.0388);transform-origin:0 0;">Nora</div>
<div class="t" style="top:536.00px;font-size:23.5px;color:#666;left:688.79px;transform:scaleX(1.0541);transform-origin:0 0;">nora@git-tower.com</div>
<div class="t" style="top:600.00px;font-size:23.5px;color:#111;left:435.86px;transform:scaleX(1.0374);transform-origin:0 0;-webkit-text-stroke:0.5px #111;">Stage All</div>
<div class="t" style="top:600.00px;font-size:23.5px;color:#111;left:907.33px;transform:scaleX(1.0663);transform-origin:0 0;-webkit-text-stroke:0.5px #111;">Commit</div>
<div class="t" style="top:678.00px;font-size:23.5px;color:#1a1a1a;left:418.44px;transform:scaleX(0.9554);transform-origin:0 0;">Status</div>
<div class="t" style="top:678.00px;font-size:23.5px;color:#1a1a1a;left:615.49px;transform:scaleX(1.0053);transform-origin:0 0;">Filename</div>
<div class="t" style="top:735.00px;font-size:23.5px;color:#1a1a1a;left:699.73px;transform:scaleX(1.0692);transform-origin:0 0;">about.html</div>
<div class="t" style="top:799.00px;font-size:23.5px;color:#1a1a1a;left:699.33px;transform:scaleX(1.1353);transform-origin:0 0;">img</div>
<div class="t" style="top:863.00px;font-size:23.5px;color:#1a1a1a;left:698.68px;transform:scaleX(1.0596);transform-origin:0 0;">index.html</div>
<div class="t" style="top:927.00px;font-size:23.5px;color:#1a1a1a;left:698.65px;transform:scaleX(1.0746);transform-origin:0 0;">product.html</div>
<div class="t" style="top:991.00px;font-size:23.5px;color:#1a1a1a;left:699.73px;transform:scaleX(1.0680);transform-origin:0 0;">error.html</div>
<div class="t" style="top:1055.00px;font-size:23.5px;color:#1a1a1a;left:698.99px;transform:scaleX(0.9069);transform-origin:0 0;">LICENSE.txt</div>
<div class="t" style="top:736.00px;font-size:19px;color:#fff;left:489.09px;-webkit-text-stroke:0.3px #fff;">M</div>
<div class="t" style="top:800.00px;font-size:19px;color:#fff;left:489.09px;-webkit-text-stroke:0.3px #fff;">M</div>
<div class="t" style="top:864.00px;font-size:19px;color:#fff;left:531.09px;-webkit-text-stroke:0.3px #fff;">M</div>
<div class="t" style="top:928.00px;font-size:19px;color:#fff;left:490.66px;-webkit-text-stroke:0.3px #fff;">A</div>
<div class="t" style="top:992.00px;font-size:19px;color:#fff;left:532.13px;-webkit-text-stroke:0.3px #fff;">D</div>
<div class="t" style="top:1057.00px;font-size:17px;color:#111;left:491.80px;font-weight:700;">?</div>
<div class="t" style="top:1057.00px;font-size:17px;color:#111;left:533.80px;font-weight:700;">?</div>
<div class="t" style="top:157.00px;font-size:23.5px;color:#111;left:1127.34px;font-weight:700;transform:scaleX(1.0641);transform-origin:0 0;">about.html</div>
<div class="t" style="top:157.00px;font-size:23.5px;color:#fff;left:2280.68px;transform:scaleX(1.0194);transform-origin:0 0;">Staged</div>
<div class="t" style="top:157.00px;font-size:23.5px;color:#666;left:2399.09px;transform:scaleX(1.0526);transform-origin:0 0;">Unstaged</div>
<div class="t" style="top:303.00px;font-size:23.5px;color:#111;left:2352.34px;transform:scaleX(1.0312);transform-origin:0 0;-webkit-text-stroke:0.4px #111;">Unstage Chunk</div>
<div class="t m" style="top:233.00px;font-size:22px;color:#8a8a8a;left:1056.00px;letter-spacing:-0.200px;">1 chunks, 1 insertions, 1 deletions.</div>
<div class="t m" style="top:304.00px;font-size:22px;color:#8a8a8a;left:1056.00px;letter-spacing:-0.200px;">@@ -9,15 +9,15 @@</div>
<div class="t m" style="top:355.00px;font-size:27px;color:#aaaaaa;right:1437.00px;letter-spacing:-1.200px;">9</div>
<div class="t m" style="top:355.00px;font-size:27px;color:#aaaaaa;right:1337.00px;letter-spacing:-1.200px;">9</div>
<div class="t m" style="top:388.00px;font-size:27px;color:#aaaaaa;right:1437.00px;letter-spacing:-1.200px;">10</div>
<div class="t m" style="top:388.00px;font-size:27px;color:#aaaaaa;right:1337.00px;letter-spacing:-1.200px;">10</div>
<div class="t m" style="top:421.00px;font-size:27px;color:#aaaaaa;right:1437.00px;letter-spacing:-1.200px;">11</div>
<div class="t m" style="top:421.00px;font-size:27px;color:#aaaaaa;right:1337.00px;letter-spacing:-1.200px;">11</div>
<div class="t m" style="top:421.00px;font-size:27px;color:#555555;left:1239.50px;letter-spacing:-1.200px;">  &lt;body&gt;</div>
<div class="t m" style="top:454.00px;font-size:27px;color:#aaaaaa;right:1437.00px;letter-spacing:-1.200px;">12</div>
<div class="t m" style="top:454.00px;font-size:27px;color:#aaaaaa;right:1337.00px;letter-spacing:-1.200px;">12</div>
<div class="t m" style="top:454.00px;font-size:27px;color:#555555;left:1239.50px;letter-spacing:-1.200px;">    &lt;div id="contentWrapper"&gt;</div>
<div class="t m" style="top:487.00px;font-size:27px;color:#aaaaaa;right:1437.00px;letter-spacing:-1.200px;">13</div>
<div class="t m" style="top:487.00px;font-size:27px;color:#aaaaaa;right:1337.00px;letter-spacing:-1.200px;">13</div>
<div class="t m" style="top:487.00px;font-size:27px;color:#555555;left:1239.50px;letter-spacing:-1.200px;">      &lt;div id="navigation"&gt;</div>
<div class="t m" style="top:520.00px;font-size:27px;color:#aaaaaa;right:1437.00px;letter-spacing:-1.200px;">14</div>
<div class="t m" style="top:520.00px;font-size:27px;color:#aaaaaa;right:1337.00px;letter-spacing:-1.200px;">14</div>
<div class="t m" style="top:520.00px;font-size:27px;color:#555555;left:1239.50px;letter-spacing:-1.200px;">        &lt;ul&gt;</div>
<div class="t m" style="top:553.00px;font-size:27px;color:#aaaaaa;right:1437.00px;letter-spacing:-1.200px;">15</div>
<div class="t m" style="top:553.00px;font-size:27px;color:#aaaaaa;right:1337.00px;letter-spacing:-1.200px;">15</div>
<div class="t m" style="top:553.00px;font-size:27px;color:#555555;left:1239.50px;letter-spacing:-1.200px;">          &lt;li&gt;&lt;a href="index.html"&gt;Home&lt;/a&gt;&lt;/li&gt;</div>
<div class="t m" style="top:586.00px;font-size:27px;color:#aaaaaa;right:1437.00px;letter-spacing:-1.200px;">-16</div>
<div class="t m" style="top:586.00px;font-size:27px;color:#555555;left:1239.50px;letter-spacing:-1.200px;">          &lt;li&gt;&lt;a href="about.html"&gt;About&lt;/a&gt;&lt;/li&gt;</div>
<div class="t m" style="top:619.00px;font-size:27px;color:#aaaaaa;right:1337.00px;letter-spacing:-1.200px;">+16</div>
<div class="t m" style="top:619.00px;font-size:27px;color:#555555;left:1239.50px;letter-spacing:-1.200px;">          &lt;li&gt;&lt;a href="about.html"&gt;About Our Car Parts&lt;/a&gt;&lt;/li&gt;</div>
<div class="t m" style="top:652.00px;font-size:27px;color:#aaaaaa;right:1437.00px;letter-spacing:-1.200px;">17</div>
<div class="t m" style="top:652.00px;font-size:27px;color:#aaaaaa;right:1337.00px;letter-spacing:-1.200px;">17</div>
<div class="t m" style="top:652.00px;font-size:27px;color:#555555;left:1239.50px;letter-spacing:-1.200px;">          &lt;li&gt;&lt;a href="imprint.html"&gt;Imprint&lt;/a&gt;&lt;/li&gt;</div>
<div class="t m" style="top:685.00px;font-size:27px;color:#aaaaaa;right:1437.00px;letter-spacing:-1.200px;">18</div>
<div class="t m" style="top:685.00px;font-size:27px;color:#aaaaaa;right:1337.00px;letter-spacing:-1.200px;">18</div>
<div class="t m" style="top:685.00px;font-size:27px;color:#555555;left:1239.50px;letter-spacing:-1.200px;">        &lt;/ul&gt;</div>
<div class="t m" style="top:718.00px;font-size:27px;color:#aaaaaa;right:1437.00px;letter-spacing:-1.200px;">19</div>
<div class="t m" style="top:718.00px;font-size:27px;color:#aaaaaa;right:1337.00px;letter-spacing:-1.200px;">19</div>
<div class="t m" style="top:718.00px;font-size:27px;color:#555555;left:1239.50px;letter-spacing:-1.200px;">      &lt;/div&gt;</div>
<div class="t m" style="top:751.00px;font-size:27px;color:#aaaaaa;right:1437.00px;letter-spacing:-1.200px;">20</div>
<div class="t m" style="top:751.00px;font-size:27px;color:#aaaaaa;right:1337.00px;letter-spacing:-1.200px;">20</div>
<div class="t m" style="top:784.00px;font-size:27px;color:#aaaaaa;right:1437.00px;letter-spacing:-1.200px;">21</div>
<div class="t m" style="top:784.00px;font-size:27px;color:#aaaaaa;right:1337.00px;letter-spacing:-1.200px;">21</div>
<div class="t m" style="top:784.00px;font-size:27px;color:#555555;left:1239.50px;letter-spacing:-1.200px;">      &lt;div id="headerContainer"&gt;</div>
<div class="t m" style="top:817.00px;font-size:27px;color:#aaaaaa;right:1437.00px;letter-spacing:-1.200px;">22</div>
<div class="t m" style="top:817.00px;font-size:27px;color:#aaaaaa;right:1337.00px;letter-spacing:-1.200px;">22</div>
<div class="t m" style="top:817.00px;font-size:27px;color:#555555;left:1239.50px;letter-spacing:-1.200px;">        &lt;h1&gt;About This Project&lt;/h1&gt;</div>
<div class="t m" style="top:850.00px;font-size:27px;color:#aaaaaa;right:1437.00px;letter-spacing:-1.200px;">23</div>
<div class="t m" style="top:850.00px;font-size:27px;color:#aaaaaa;right:1337.00px;letter-spacing:-1.200px;">23</div>
<div class="t m" style="top:850.00px;font-size:27px;color:#555555;left:1239.50px;letter-spacing:-1.200px;">      &lt;/div&gt;</div>
</body></html>
